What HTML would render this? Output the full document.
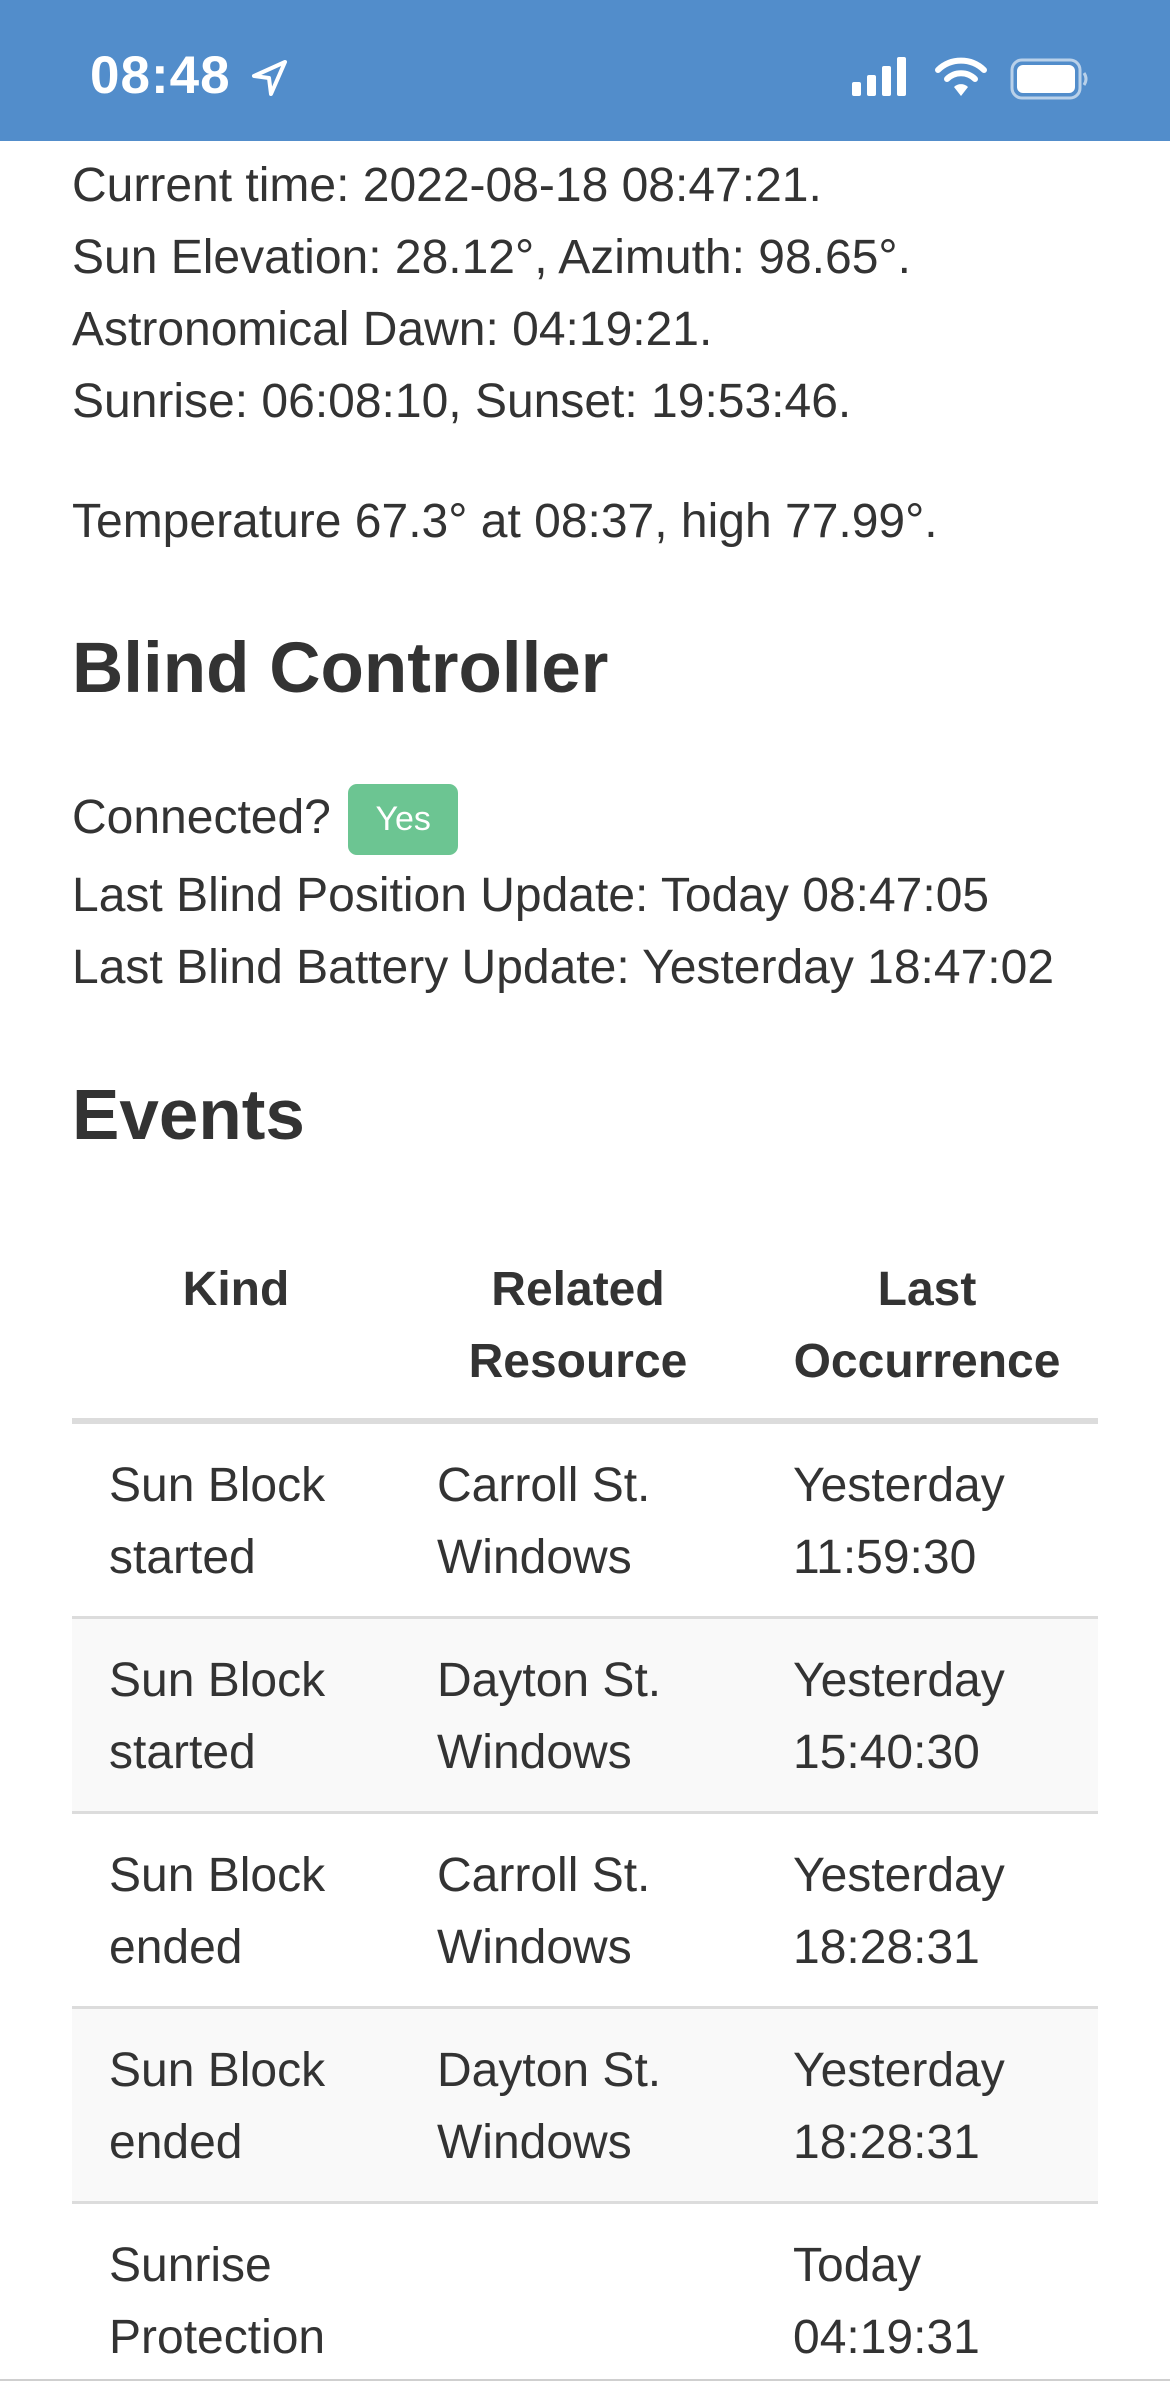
<!DOCTYPE html>
<html><head><meta charset="utf-8"><style>
*{margin:0;padding:0;box-sizing:border-box}
html,body{width:1170px;height:2400px;background:#fff;overflow:hidden}
body{font-family:"Liberation Sans",Helvetica,Arial,sans-serif;color:#333;font-size:48px;line-height:72px}
.sb{position:absolute;left:0;top:0;width:1170px;height:141px;background:#528dcb;color:#fff}
.sb .t{position:absolute;left:90px;top:46px;font-size:53px;font-weight:bold;line-height:60px;letter-spacing:1px}
.c{position:absolute;left:72px;width:1026px}
h2{font-size:71px;line-height:80px;font-weight:bold;color:#333}
.badge{display:inline-block;background:#6cc592;color:#fff;border-radius:9px;width:110px;height:71px;line-height:71px;text-align:center;font-size:34px;vertical-align:top;margin-top:-31px;position:relative;top:33px;margin-left:4px}
table{position:absolute;left:72px;top:1232px;width:1026px;border-collapse:collapse}
th{font-weight:bold;text-align:center;padding:22px 20px 20px;border-bottom:6px solid #dcdcdc;vertical-align:top}
td{padding:26px 37px 22px;border-top:3px solid #dcdcdc;vertical-align:top;height:194px}
tr.s td{background:#f9f9f9}
</style></head><body>
<div class="sb"><div class="t">08:48</div>
<svg style="position:absolute;left:250px;top:58px" width="40" height="40" viewBox="0 0 40 40"><path d="M35 4 L4 18 L19 20 L21 36 Z" fill="none" stroke="#fff" stroke-width="4" stroke-linejoin="round"/></svg>
<svg style="position:absolute;left:852px;top:56px" width="64" height="40" viewBox="0 0 64 40"><rect x="0" y="26" width="9" height="14" rx="2" fill="#fff"/><rect x="15" y="19" width="9" height="21" rx="2" fill="#fff"/><rect x="30" y="10" width="9" height="30" rx="2" fill="#fff"/><rect x="45" y="1" width="9" height="39" rx="2" fill="#fff"/></svg>
<svg style="position:absolute;left:935px;top:56px" width="52" height="42" viewBox="0 0 52 42"><path d="M3 14 A33 33 0 0 1 49 14" fill="none" stroke="#fff" stroke-width="6" stroke-linecap="round"/><path d="M12 23 A20 20 0 0 1 40 23" fill="none" stroke="#fff" stroke-width="6" stroke-linecap="round"/><path d="M19 31 L26 40 L33 31 A10 10 0 0 0 19 31Z" fill="#fff"/></svg>
<svg style="position:absolute;left:1010px;top:58px" width="80" height="42" viewBox="0 0 80 42"><rect x="2" y="2" width="68" height="38" rx="10" fill="none" stroke="#fff" stroke-opacity=".6" stroke-width="3"/><rect x="7" y="7" width="58" height="28" rx="6" fill="#fff"/><path d="M74 15 Q78 21 74 27" stroke="#fff" stroke-opacity=".6" stroke-width="3" fill="none"/></svg>
</div>
<div class="c" style="top:150px">Current time: 2022-08-18 08:47:21.<br>Sun Elevation: 28.12°, Azimuth: 98.65°.<br>Astronomical Dawn: 04:19:21.<br>Sunrise: 06:08:10, Sunset: 19:53:46.</div>
<div class="c" style="top:486px">Temperature 67.3° at 08:37, high 77.99°.</div>
<h2 class="c" style="top:629px">Blind Controller</h2>
<div class="c" style="top:782px">Connected? <span class="badge">Yes</span></div>
<div class="c" style="top:860px">Last Blind Position Update: Today 08:47:05<br>Last Blind Battery Update: Yesterday 18:47:02</div>
<h2 class="c" style="top:1076px">Events</h2>
<table>
<colgroup><col style="width:328px"><col style="width:356px"><col style="width:342px"></colgroup>
<tr><th>Kind</th><th>Related Resource</th><th>Last Occurrence</th></tr>
<tr><td>Sun Block started</td><td>Carroll St. Windows</td><td>Yesterday 11:59:30</td></tr>
<tr class="s"><td>Sun Block started</td><td>Dayton St. Windows</td><td>Yesterday 15:40:30</td></tr>
<tr><td>Sun Block ended</td><td>Carroll St. Windows</td><td>Yesterday 18:28:31</td></tr>
<tr class="s"><td>Sun Block ended</td><td>Dayton St. Windows</td><td>Yesterday 18:28:31</td></tr>
<tr><td>Sunrise Protection</td><td></td><td>Today 04:19:31</td></tr>
</table>
<div style="position:absolute;left:0;top:2379px;width:1170px;height:21px;background:#fff;border-top:2px solid #cfcfcf"></div>
</body></html>
